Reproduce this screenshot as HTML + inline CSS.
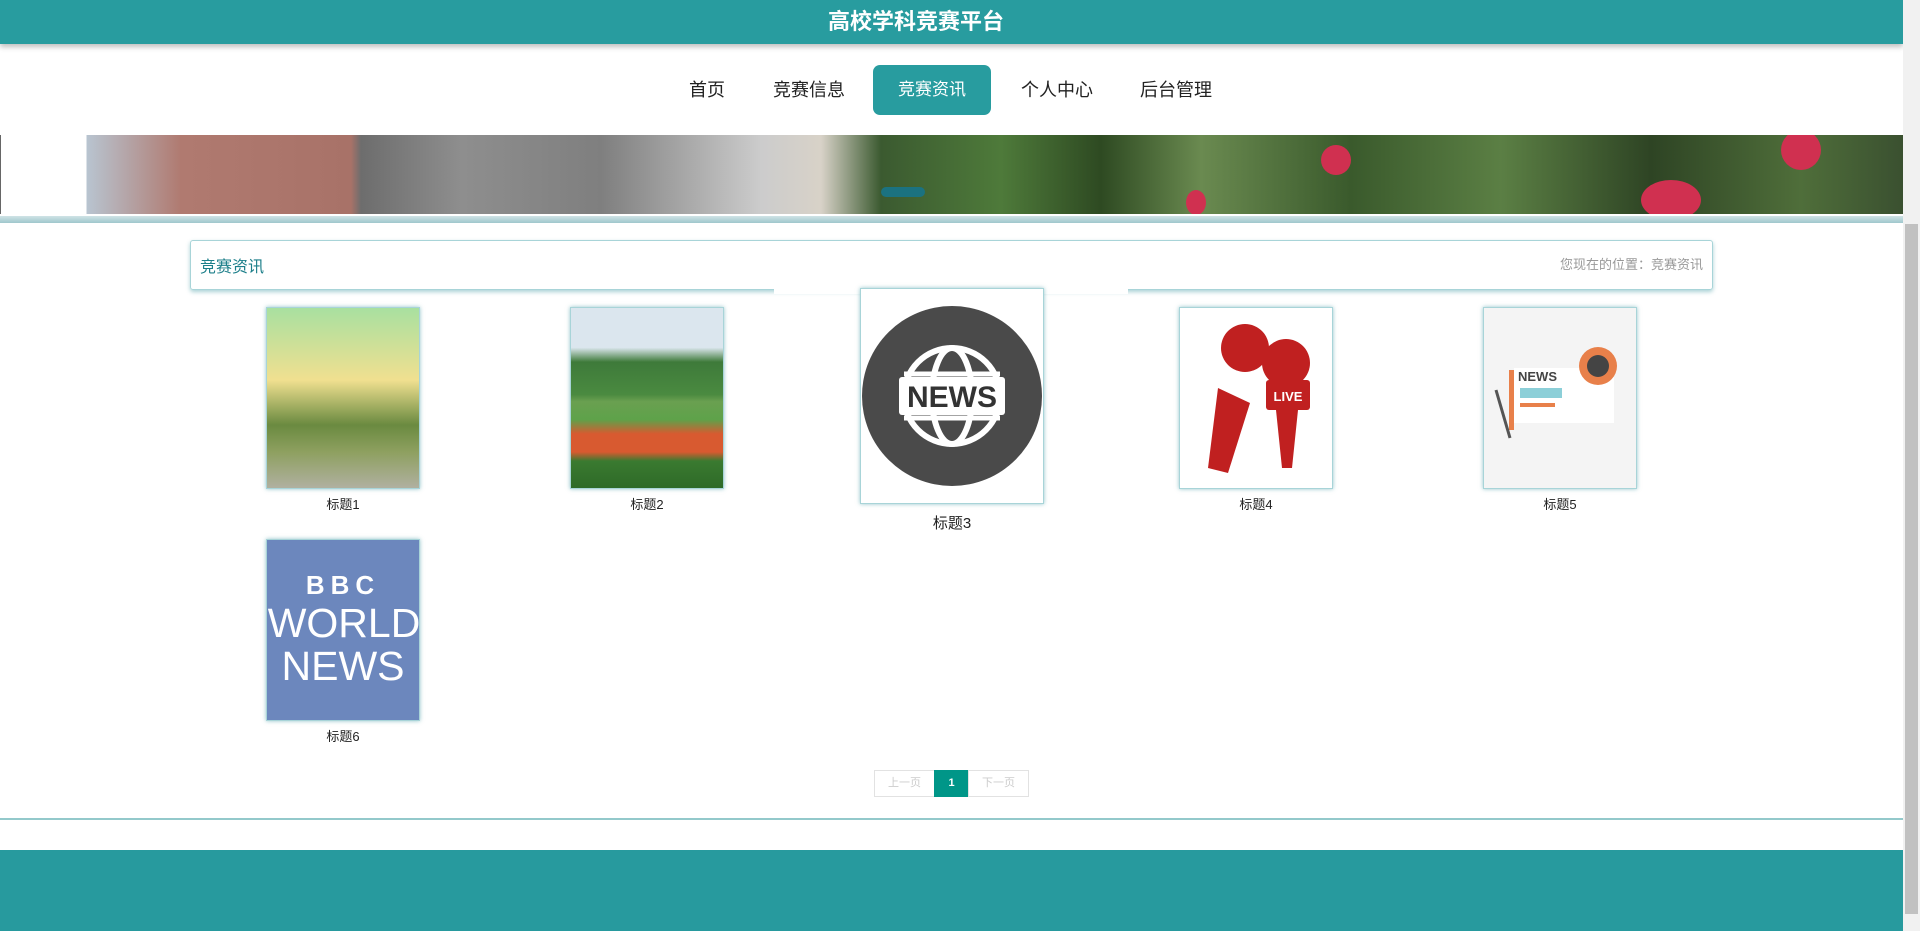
<!DOCTYPE html>
<html><head><meta charset="utf-8"><style>
*{margin:0;padding:0;box-sizing:border-box}
body{width:1920px;height:931px;overflow:hidden;background:#fff;font-family:"Liberation Sans","Noto Sans CJK SC",sans-serif;position:relative}
.hdr{position:absolute;left:0;top:0;width:1903px;height:44px;background:#289c9f;box-shadow:0 3px 5px rgba(0,0,0,.25)}
.hdr span{position:absolute;left:826px;top:0;width:180px;text-align:center;color:#fff;font-size:22px;line-height:44px;font-weight:bold}
.sb{position:absolute;right:0;top:0;width:17px;height:931px;background:#f1f1f1}
.sb div{position:absolute;left:2px;top:224px;width:13px;height:690px;background:#c1c1c1}
.nav{position:absolute;top:65px;height:50px;font-size:18px;color:#222;line-height:50px}
.nav.a{background:#289c9f;color:#fff;border-radius:7px;width:118px;text-align:center;font-size:17px}
.ban{position:absolute;left:0;top:135px;width:1903px;height:79px;overflow:hidden;border-left:1px solid #666;
background:linear-gradient(90deg,#fff 0,#fff 85px,#b8c4d0 86px,#b07a70 180px,#a87268 350px,#6d6d6d 360px,#8e8e8e 460px,#7f7f7f 600px,#ccc 760px,#d8d2c8 820px,#3b5a30 880px,#4e7a3a 1000px,#2e4a22 1100px,#6a8a50 1200px,#3a5a2c 1350px,#5b7f44 1500px,#2e4424 1650px,#4f6e3a 1800px,#3a5030 1903px)}
.ban .r{position:absolute;border-radius:50%;background:#d03050}
.dot{position:absolute;left:880px;top:52px;width:44px;height:10px;border-radius:5px;background:#1b7280}
.band{position:absolute;left:0;top:216px;width:1903px;height:7px;background:linear-gradient(#cfe3e6,#9fc7cc)}
.box{position:absolute;left:190px;top:240px;width:1523px;height:50px;border:1px solid #a8d4d8;border-radius:3px;box-shadow:0 2px 4px rgba(40,140,150,.4)}
.box .t{position:absolute;left:9px;top:12px;font-size:16px;color:#1d7f8a}
.box .b{position:absolute;right:9px;top:13px;font-size:13px;color:#999}
.gap{position:absolute;left:774px;top:286px;width:354px;height:8px;background:#fff}
.card{position:absolute;width:154px;height:182px;border:1px solid #a8d4d8;box-shadow:0 0 4px rgba(40,140,150,.5);overflow:hidden}
.cap{position:absolute;font-size:13px;color:#222;width:154px;text-align:center}
.pg{position:absolute;top:770px;height:27px;font-size:11px;line-height:25px;text-align:center;color:#ccc;border:1px solid #e2e2e2}
.ln{position:absolute;left:0;top:818px;width:1903px;height:2px;background:#93c9cb}
.ft{position:absolute;left:0;top:850px;width:1903px;height:81px;background:#279a9e}
</style></head><body>
<div class="hdr"><span>高校学科竞赛平台</span></div>
<div class="nav" style="left:689px">首页</div>
<div class="nav" style="left:773px">竞赛信息</div>
<div class="nav a" style="left:873px">竞赛资讯</div>
<div class="nav" style="left:1021px">个人中心</div>
<div class="nav" style="left:1140px">后台管理</div>
<div class="ban">
<div class="r" style="left:1320px;top:10px;width:30px;height:30px"></div>
<div class="r" style="left:1640px;top:45px;width:60px;height:40px"></div>
<div class="r" style="left:1780px;top:-5px;width:40px;height:40px"></div>
<div class="r" style="left:1185px;top:55px;width:20px;height:25px"></div>
<div class="dot"></div></div>
<div class="band"></div>
<div class="box"><span class="t">竞赛资讯</span><span class="b">您现在的位置：竞赛资讯</span></div>
<div class="gap"></div>

<div class="card" style="left:266px;top:307px;background:linear-gradient(#a8e0a0,#f0e090 40%,#6a8a40 65%,#8ea060 80%,#b0b0a0)"></div>
<div class="cap" style="left:266px;top:494px">标题1</div>
<div class="card" style="left:570px;top:307px;background:linear-gradient(#dbe6ee 0,#dbe6ee 22%,#3e7a3a 30%,#4a8a40 48%,#6aa050 52%,#5ea24a 62%,#d85a30 70%,#d85a30 80%,#3a7a30 85%,#2e6a28)"></div>
<div class="cap" style="left:570px;top:494px">标题2</div>
<div class="card" style="left:860px;top:288px;width:184px;height:216px;background:#fff">
<svg width="182" height="214" viewBox="0 0 182 214"><circle cx="91" cy="107" r="90" fill="#4a4a4a"/><circle cx="91" cy="107" r="48" fill="none" stroke="#fff" stroke-width="6"/><ellipse cx="91" cy="107" rx="20" ry="48" fill="none" stroke="#fff" stroke-width="6"/><line x1="43" y1="85" x2="139" y2="85" stroke="#fff" stroke-width="5"/><line x1="43" y1="129" x2="139" y2="129" stroke="#fff" stroke-width="5"/><rect x="38" y="88" width="106" height="38" rx="3" fill="#fff"/><text x="91" y="118" text-anchor="middle" font-family="Liberation Sans" font-weight="bold" font-size="30" fill="#333">NEWS</text></svg></div>
<div class="cap" style="left:875px;top:512px;font-size:15px">标题3</div>
<div class="card" style="left:1179px;top:307px;background:#fff">
<svg width="152" height="180"><circle cx="65" cy="40" r="24" fill="#c02020"/><circle cx="106" cy="55" r="24" fill="#c02020"/><polygon points="38,80 70,95 48,165 28,160" fill="#c02020"/><rect x="86" y="72" width="44" height="30" rx="3" fill="#c02020"/><text x="108" y="93" text-anchor="middle" font-size="13" font-weight="bold" fill="#fff" font-family="Liberation Sans">LIVE</text><polygon points="96,102 118,102 112,160 102,160" fill="#c02020"/></svg></div>
<div class="cap" style="left:1179px;top:494px">标题4</div>
<div class="card" style="left:1483px;top:307px;background:#f4f4f4">
<svg width="152" height="180"><rect x="30" y="60" width="100" height="55" fill="#fff"/><text x="34" y="73" font-size="13" font-weight="bold" fill="#444" font-family="Liberation Sans">NEWS</text><rect x="36" y="80" width="42" height="10" fill="#8ccfd8"/><rect x="36" y="95" width="35" height="4" fill="#e8804a"/><rect x="25" y="62" width="5" height="60" fill="#e8804a"/><circle cx="114" cy="58" r="19" fill="#e8804a"/><circle cx="114" cy="58" r="11" fill="#444"/><line x1="12" y1="82" x2="26" y2="130" stroke="#555" stroke-width="3"/></svg></div>
<div class="cap" style="left:1483px;top:494px">标题5</div>
<div class="card" style="left:266px;top:539px;background:#6c87bd;color:#fff;text-align:center;font-family:'Liberation Sans',sans-serif">
<div style="margin-top:30px;font-size:26px;font-weight:bold;letter-spacing:6px">BBC</div>
<div style="font-size:41px;line-height:44px;margin-left:-4px;width:162px">WORLD</div>
<div style="font-size:41px;line-height:42px">NEWS</div></div>
<div class="cap" style="left:266px;top:726px">标题6</div>

<div class="pg" style="left:874px;width:61px">上一页</div>
<div class="pg" style="left:934px;width:35px;background:#009688;color:#fff;border-color:#009688;font-weight:bold">1</div>
<div class="pg" style="left:968px;width:61px">下一页</div>
<div class="ln"></div>
<div class="ft"></div>
<div class="sb"><div></div></div>
</body></html>
